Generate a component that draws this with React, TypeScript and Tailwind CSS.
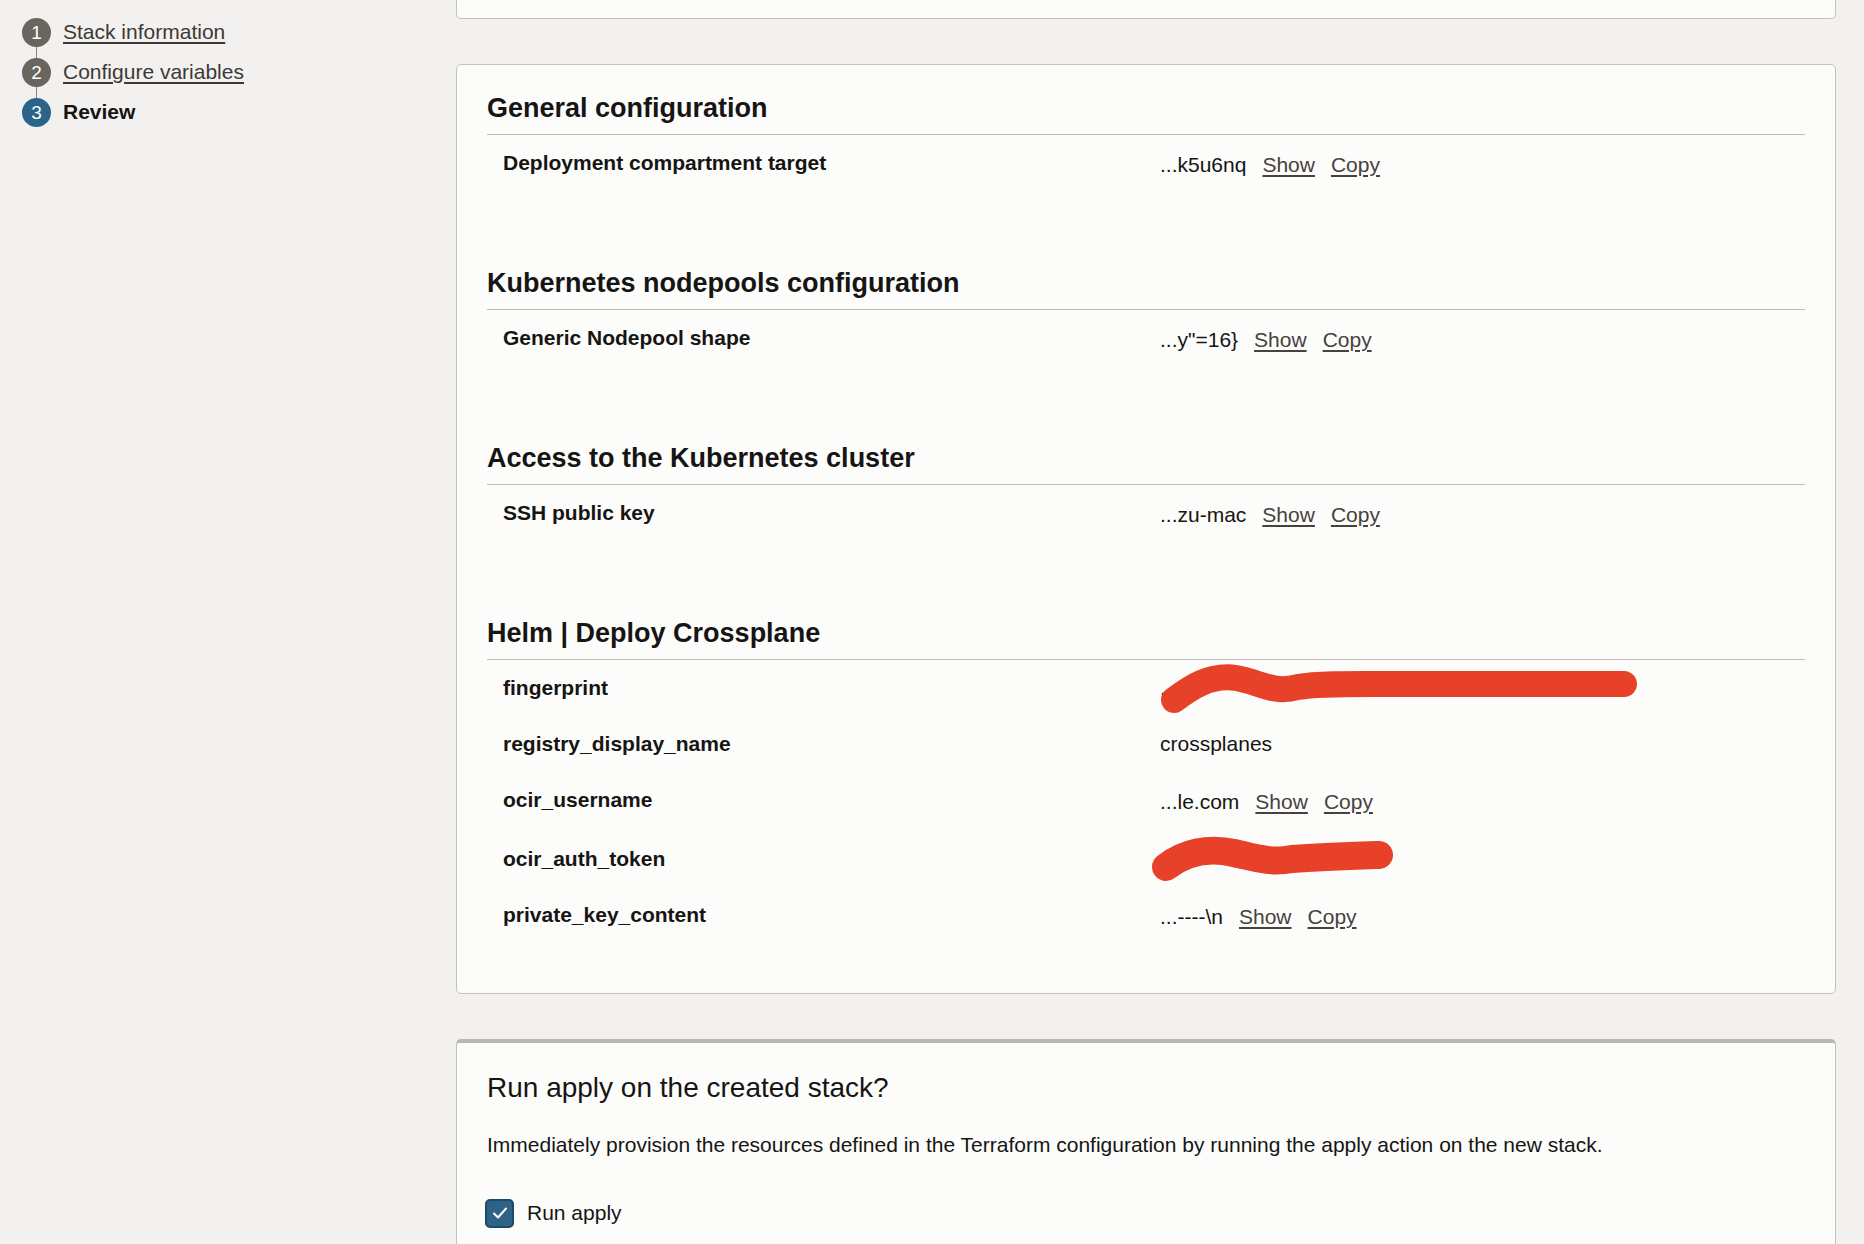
import React from "react";

type Row = {
  label: string;
  value?: string;
  link?: boolean;
  redact?: "fp" | "token";
};

const sections: { title: string; rows: Row[] }[] = [
  {
    title: "General configuration",
    rows: [{ label: "Deployment compartment target", value: "...k5u6nq", link: true }],
  },
  {
    title: "Kubernetes nodepools configuration",
    rows: [{ label: "Generic Nodepool shape", value: '...y"=16}', link: true }],
  },
  {
    title: "Access to the Kubernetes cluster",
    rows: [{ label: "SSH public key", value: "...zu-mac", link: true }],
  },
  {
    title: "Helm | Deploy Crossplane",
    rows: [
      { label: "fingerprint", value: "...", redact: "fp" },
      { label: "registry_display_name", value: "crossplanes" },
      { label: "ocir_username", value: "...le.com", link: true },
      { label: "ocir_auth_token", value: "...)", redact: "token" },
      { label: "private_key_content", value: "...----\\n", link: true },
    ],
  },
];

function Step({ n, label, active, last }: { n: number; label: string; active?: boolean; last?: boolean }) {
  return (
    <div className="flex items-center h-[40px]">
      <div className="relative w-[29px] h-[29px] shrink-0">
        {!last && (
          <div className="absolute left-[14px] top-[28px] w-[1px] h-[13px] bg-[#8a847e]" />
        )}
        <div
          className={
            active
              ? "relative w-[29px] h-[29px] rounded-full bg-[#2a6589] text-white flex items-center justify-center text-[19px] leading-none"
              : "relative w-[29px] h-[29px] rounded-full bg-[#6b655f] text-white flex items-center justify-center text-[19px] leading-none"
          }
        >
          {n}
        </div>
      </div>
      {active ? (
        <span className="ml-[12px] text-[21px] font-bold text-[#161513]">{label}</span>
      ) : (
        <span className="ml-[12px] text-[21px] text-[#3d3935] underline underline-offset-[3px] decoration-[1.5px]">
          {label}
        </span>
      )}
    </div>
  );
}

function Redaction({ kind }: { kind: "fp" | "token" }) {
  if (kind === "fp") {
    return (
      <svg
        className="absolute left-0 top-0 overflow-visible pointer-events-none"
        width="480"
        height="60"
        viewBox="0 0 480 60"
      >
        <path
          d="M 14 40 C 30 28, 50 14, 76 18 C 100 22, 112 34, 138 27 C 160 23, 200 24, 240 24 L 464 24"
          fill="none"
          stroke="#e8412a"
          strokeWidth="26"
          strokeLinecap="round"
          strokeLinejoin="round"
        />
      </svg>
    );
  }
  return (
    <svg
      className="absolute left-0 top-0 overflow-visible pointer-events-none"
      width="240"
      height="60"
      viewBox="0 0 240 60"
    >
      <path
        d="M 6 36 C 24 22, 48 16, 74 22 C 96 27, 110 32, 132 28 C 160 26, 190 25, 219 24"
        fill="none"
        stroke="#e8412a"
        strokeWidth="28"
        strokeLinecap="round"
        strokeLinejoin="round"
      />
    </svg>
  );
}

function DataRow({ row }: { row: Row }) {
  return (
    <div className={row.link ? "flex pl-[16px] pt-[15px] h-[59px]" : "flex pl-[16px] pt-[15px] h-[56px]"}>
      <div className="w-[657px] shrink-0 font-bold text-[21px] leading-[25px] text-[#161513]">
        {row.label}
      </div>
      <div className={row.link ? "relative flex text-[21px] leading-[25px] pt-[2px]" : "relative flex text-[21px] leading-[25px]"}>
        <span className="text-[#161513]">{row.value}</span>
        {row.link && (
          <>
            <span className="ml-[16px] text-[#46423e] underline underline-offset-[3px] decoration-[1.5px]">Show</span>
            <span className="ml-[16px] text-[#46423e] underline underline-offset-[3px] decoration-[1.5px]">Copy</span>
          </>
        )}
        {row.redact && (
          <div className="absolute left-0 -top-[15px]">
            <Redaction kind={row.redact} />
          </div>
        )}
      </div>
    </div>
  );
}

export default function App() {
  return (
    <div className="h-[1244px] w-full overflow-hidden bg-[#f2f1ef] flex font-['Liberation_Sans',Arial,Helvetica,sans-serif] text-[#161513]">
      <aside className="w-[456px] shrink-0 pt-[12px] pl-[22px]">
        <Step n={1} label="Stack information" />
        <Step n={2} label="Configure variables" />
        <Step n={3} label="Review" active last />
      </aside>

      <main className="w-[1380px] shrink-0 flex flex-col">
        <div className="h-[19px] shrink-0 bg-[#fcfcfb] border-x border-b border-[#c6c1bc] rounded-b-[5px]" />

        <div className="mt-[45px] shrink-0 bg-[#fcfcfb] border border-[#c6c1bc] rounded-[5px] px-[30px] pt-[27px] pb-[47px]">
          {sections.map((s, i) => (
            <section key={s.title} className={i === 0 ? "" : "mt-[73px]"}>
              <h2 className="text-[27px] font-bold leading-[32px] pb-[10px] border-b border-[#c0bbb6] text-[#161513]">
                {s.title}
              </h2>
              {s.rows.map((r) => (
                <DataRow key={r.label} row={r} />
              ))}
            </section>
          ))}
        </div>

        <div className="mt-[45px] shrink-0 h-[260px] bg-[#fcfcfb] border-x border-[#c6c1bc] border-t-[4px] border-t-[#bcb6b0] rounded-t-[5px] px-[30px] pt-[28px]">
          <h2 className="text-[28px] leading-[34px] font-normal text-[#161513]">Run apply on the created stack?</h2>
          <p className="mt-[27px] text-[21px] leading-[25px] text-[#161513]">
            Immediately provision the resources defined in the Terraform configuration by running the apply action on the new stack.
          </p>
          <div className="mt-[41px] flex items-center h-[30px]">
            <div className="ml-[-2px] w-[29px] h-[29px] rounded-[5px] bg-[#2c6387] border-[2px] border-[#1e4a68] flex items-center justify-center">
              <svg width="18" height="18" viewBox="0 0 18 18">
                <path d="M3 9.5 L7 13.5 L15 4.5" fill="none" stroke="white" strokeWidth="2" strokeLinecap="round" strokeLinejoin="round" />
              </svg>
            </div>
            <span className="ml-[13px] text-[21px] text-[#161513]">Run apply</span>
          </div>
        </div>
      </main>
    </div>
  );
}
